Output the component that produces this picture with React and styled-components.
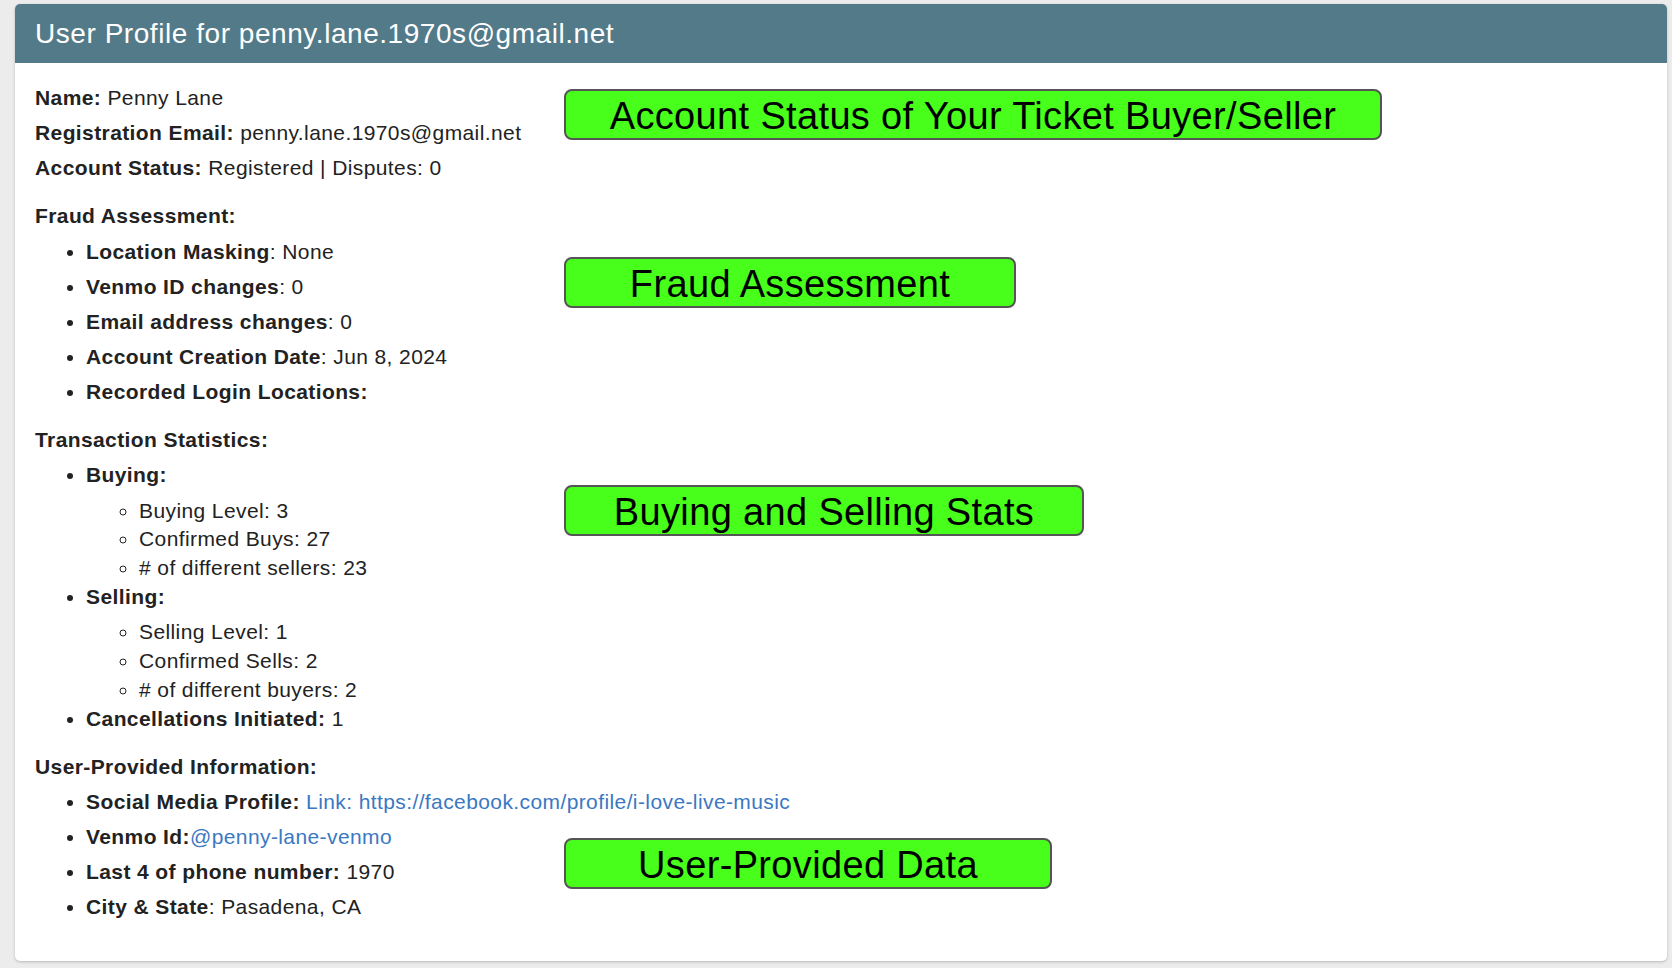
import React from "react"
import { styled, createGlobalStyle } from "styled-components"

const GlobalStyle = createGlobalStyle`
  html, body {
    margin: 0;
    background: #ececec;
  }
  body {
    padding: 4px 5px 8px 15px;
    font-family: "Liberation Sans", Arial, Helvetica, sans-serif;
    color: #222;
  }
`

const Card = styled.div`
  background: #fff;
  border-radius: 5px;
  overflow: hidden;
  box-shadow: 0 1px 3px rgba(0, 0, 0, 0.22);
`

const Header = styled.header`
  height: 59px;
  background: #537a89;
  display: flex;
  align-items: center;
  padding: 0 20px;
`

const Title = styled.h1`
  margin: 0;
  font-size: 28px;
  font-weight: normal;
  letter-spacing: 0.55px;
  color: #fff;
`

const Body = styled.div`
  display: grid;
  grid-template-columns: 529px 1fr;
  padding: 21px 20px 32px;
`

const Info = styled.div`
  font-size: 21px;
  letter-spacing: 0.4px;
  white-space: nowrap;
`

const Line = styled.p`
  margin: 0 0 6.4px;
  line-height: 28.8px;
`

// margins collapse with the line above, so this is the whole gap
const Section = styled.section`
  margin-top: 19.2px;
`

const List = styled.ul`
  margin: 0;
  padding-left: 51px;
  list-style: disc;
`

const Item = styled.li`
  line-height: 28.8px;
`

const ItemText = styled.div`
  margin-bottom: 6.4px;
`

const SubList = styled.ul`
  margin: 0;
  padding-left: 53px;
  list-style: circle;
`

const SubItem = styled.li`
  line-height: 28.8px;
`

const Link = styled.a`
  color: #3a78c2;
  text-decoration: none;
`

const Notes = styled.div`
  display: flex;
  flex-direction: column;
  align-items: flex-start;
`

const Callout = styled.div`
  box-sizing: border-box;
  width: ${(p) => p.$width}px;
  height: 51px;
  margin-top: ${(p) => p.$top}px;
  padding-top: 4px;
  display: flex;
  align-items: center;
  justify-content: center;
  background: #47ff1a;
  border: 2px solid #555;
  border-radius: 8px;
  font-size: 38px;
  letter-spacing: 0.35px;
  color: #000;
  white-space: nowrap;
`

const notes = [
  { text: "Account Status of Your Ticket Buyer/Seller", width: 818, top: 5 },
  { text: "Fraud Assessment", width: 452, top: 117 },
  { text: "Buying and Selling Stats", width: 520, top: 177 },
  { text: "User-Provided Data", width: 488, top: 302 },
]

export default function App() {
  return (
    <>
      <GlobalStyle />
      <Card>
        <Header>
          <Title>User Profile for penny.lane.1970s@gmail.net</Title>
        </Header>
        <Body>
          <Info>
            <Line>
              <b>Name:</b> Penny Lane
            </Line>
            <Line>
              <b>Registration Email:</b> penny.lane.1970s@gmail.net
            </Line>
            <Line>
              <b>Account Status:</b> Registered | Disputes: 0
            </Line>

            <Section>
              <Line>
                <b>Fraud Assessment:</b>
              </Line>
              <List>
                <Item>
                  <ItemText>
                    <b>Location Masking</b>: None
                  </ItemText>
                </Item>
                <Item>
                  <ItemText>
                    <b>Venmo ID changes</b>: 0
                  </ItemText>
                </Item>
                <Item>
                  <ItemText>
                    <b>Email address changes</b>: 0
                  </ItemText>
                </Item>
                <Item>
                  <ItemText>
                    <b>Account Creation Date</b>: Jun 8, 2024
                  </ItemText>
                </Item>
                <Item>
                  <ItemText>
                    <b>Recorded Login Locations:</b>
                  </ItemText>
                </Item>
              </List>
            </Section>

            <Section>
              <Line>
                <b>Transaction Statistics:</b>
              </Line>
              <List>
                <Item>
                  <ItemText>
                    <b>Buying:</b>
                  </ItemText>
                  <SubList>
                    <SubItem>Buying Level: 3</SubItem>
                    <SubItem>Confirmed Buys: 27</SubItem>
                    <SubItem># of different sellers: 23</SubItem>
                  </SubList>
                </Item>
                <Item>
                  <ItemText>
                    <b>Selling:</b>
                  </ItemText>
                  <SubList>
                    <SubItem>Selling Level: 1</SubItem>
                    <SubItem>Confirmed Sells: 2</SubItem>
                    <SubItem># of different buyers: 2</SubItem>
                  </SubList>
                </Item>
                <Item>
                  <ItemText>
                    <b>Cancellations Initiated:</b> 1
                  </ItemText>
                </Item>
              </List>
            </Section>

            <Section>
              <Line>
                <b>User-Provided Information:</b>
              </Line>
              <List>
                <Item>
                  <ItemText>
                    <b>Social Media Profile:</b>{" "}
                    <Link href="#">
                      Link: https://facebook.com/profile/i-love-live-music
                    </Link>
                  </ItemText>
                </Item>
                <Item>
                  <ItemText>
                    <b>Venmo Id:</b>
                    <Link href="#">@penny-lane-venmo</Link>
                  </ItemText>
                </Item>
                <Item>
                  <ItemText>
                    <b>Last 4 of phone number:</b> 1970
                  </ItemText>
                </Item>
                <Item>
                  <ItemText>
                    <b>City &amp; State</b>: Pasadena, CA
                  </ItemText>
                </Item>
              </List>
            </Section>
          </Info>

          <Notes>
            {notes.map((n) => (
              <Callout key={n.text} $width={n.width} $top={n.top}>
                {n.text}
              </Callout>
            ))}
          </Notes>
        </Body>
      </Card>
    </>
  )
}
